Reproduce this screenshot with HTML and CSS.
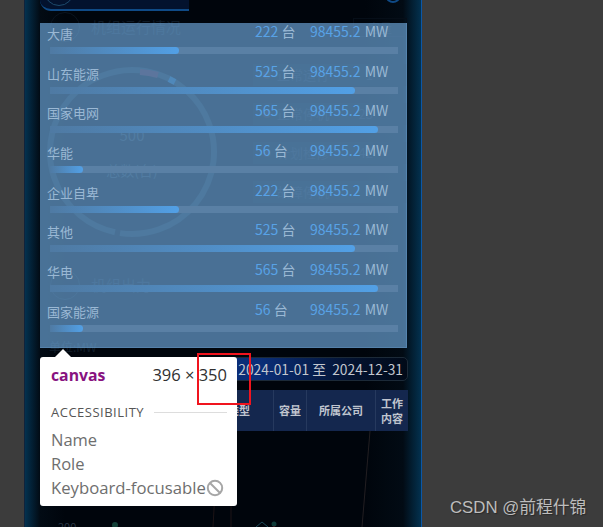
FILE: index.html
```html
<!DOCTYPE html>
<html lang="zh">
<head>
<meta charset="utf-8">
<title>canvas</title>
<link rel="stylesheet" href="styles.css">
</head>
<body>
<div class="stage">
  <main class="phone">
    <div class="topbar"><span class="topring"></span></div>
    <span class="topdot"></span>
    <section class="ghost-head">
      <span class="ghost-icon"></span>
      <h2>机组运行情况</h2>
      <span class="pill">容量</span>
    </section>
    <section class="gauge-row">
      <div class="gauge">
        <svg class="gauge-svg" viewBox="0 0 176 176" aria-hidden="true">
          <path d="M71 168.2A82 82 0 1 1 76 169.1" fill="none" stroke="#0f1e2a" stroke-width="6"/>
          <path d="M96 8A82 82 0 0 1 114 11" fill="none" stroke="#3a1424" stroke-width="6"/>
          <path d="M125 15L131 18" fill="none" stroke="#124a78" stroke-width="6"/>
        </svg>
        <span class="g-num">500</span>
        <span class="g-label">总数(台)</span>
      </div>
      <ul class="status">
        <li><b></b>正常运行<i>1</i></li>
        <li><b></b>正常停机<i>23</i></li>
        <li><b></b>计划检修<i>42</i></li>
        <li><b></b>故障停机<i>7</i></li>
      </ul>
    </section>
    <section class="ghost-head second">
      <span class="ghost-icon"></span>
      <h2>机组出力</h2>
    </section>
    <p class="unit">单位:MW</p>
    <div class="date-row">
      <div class="date">2024-01-01 至&nbsp; 2024-12-31</div>
    </div>
    <div class="thead">
      <div class="th th-a">机组类型</div>
      <div class="th th-b">容量</div>
      <div class="th th-c">所属公司</div>
      <div class="th th-d">工作<br>内容</div>
    </div>
    <div class="chart">
      <svg class="chart-svg" viewBox="0 0 366 96" aria-hidden="true">
        <path d="M329 0L321 96" stroke="#221f22" fill="none"/>
        <path d="M174 60L172 96M190 60L190 96" stroke="#1c1416" fill="none"/>
        <circle cx="74" cy="94" r="3" fill="#134038"/>
        <path d="M215 96L221 91L227 96" stroke="#1c4a58" fill="none"/>
        <circle cx="233" cy="93" r="2.5" fill="#0e3a38"/>
        <path d="M230 97L233 95L236 97" fill="#4a1620"/>
      </svg>
      <span class="tick">200</span>
    </div>
  </main>

  <div class="highlight">
    <div class="hrow"><div class="htext"><span class="name">大唐</span><span class="count"><em>222</em> 台</span><span class="power"><em>98455.2</em> MW</span></div><div class="track"><div class="fill" style="width:37%"></div></div></div>
    <div class="hrow"><div class="htext"><span class="name">山东能源</span><span class="count"><em>525</em> 台</span><span class="power"><em>98455.2</em> MW</span></div><div class="track"><div class="fill" style="width:87.6%"></div></div></div>
    <div class="hrow"><div class="htext"><span class="name">国家电网</span><span class="count"><em>565</em> 台</span><span class="power"><em>98455.2</em> MW</span></div><div class="track"><div class="fill" style="width:94.3%"></div></div></div>
    <div class="hrow"><div class="htext"><span class="name">华能</span><span class="count"><em>56</em> 台</span><span class="power"><em>98455.2</em> MW</span></div><div class="track"><div class="fill" style="width:9.5%"></div></div></div>
    <div class="hrow"><div class="htext"><span class="name">企业自卑</span><span class="count"><em>222</em> 台</span><span class="power"><em>98455.2</em> MW</span></div><div class="track"><div class="fill" style="width:37%"></div></div></div>
    <div class="hrow"><div class="htext"><span class="name">其他</span><span class="count"><em>525</em> 台</span><span class="power"><em>98455.2</em> MW</span></div><div class="track"><div class="fill" style="width:87.6%"></div></div></div>
    <div class="hrow"><div class="htext"><span class="name">华电</span><span class="count"><em>565</em> 台</span><span class="power"><em>98455.2</em> MW</span></div><div class="track"><div class="fill" style="width:94.3%"></div></div></div>
    <div class="hrow"><div class="htext"><span class="name">国家能源</span><span class="count"><em>56</em> 台</span><span class="power"><em>98455.2</em> MW</span></div><div class="track"><div class="fill" style="width:9.5%"></div></div></div>
  </div>

  <aside class="tip">
    <div class="tip-head"><span class="tag">canvas</span><span class="size">396 × 350</span></div>
    <div class="tip-section"><span>ACCESSIBILITY</span><hr></div>
    <div class="tip-line">Name</div>
    <div class="tip-line">Role</div>
    <div class="tip-line tip-key">Keyboard-focusable<svg class="ban" viewBox="0 0 18 18" aria-hidden="true"><circle cx="9" cy="9" r="7.2" fill="none" stroke="#a6a6a6" stroke-width="2"/><path d="M4 4L14 14" stroke="#a6a6a6" stroke-width="2"/></svg></div>
  </aside>
  <div class="redbox"></div>
  <div class="mark">CSDN @前程什锦</div>
</div>
</body>
</html>
```

FILE: styles.css
```css
* { box-sizing: border-box; }
html, body { margin: 0; padding: 0; }
body {
  background: #3c3c3c;
  font-family: "Noto Sans CJK SC", "Noto Sans", sans-serif;
  overflow: hidden;
}
.stage {
  position: relative;
  width: 603px;
  height: 527px;
  overflow: hidden;
}
.phone {
  position: relative;
  width: 398px;
  height: 527px;
  margin-left: 24px;
  padding: 0 14px 0 16px;
  border-left: 1px solid #10233c;
  border-right: 1px solid #0a57a8;
  background:
    linear-gradient(90deg, #03314f 0, #020b14 15px, #00050c 40px, #00050c 340px, #020b14 378px, #03314f 396px);
  color: #121e2a;
  display: flex;
  flex-direction: column;
}
.topbar {
  height: 11px;
  width: 149px;
  flex: none;
  background: #03122e;
  border-bottom: 2px solid #0f4a86;
  margin-left: -1px;
  overflow: hidden;
  position: relative;
  border-bottom-left-radius: 14px;
}
.topring {
  display: block;
  position: absolute;
  left: 4px;
  top: -24px;
  width: 30px;
  height: 30px;
  border: 1px solid #1d4a6c;
  border-radius: 50%;
}
.topdot {
  position: absolute;
  left: 361px;
  top: -9px;
  width: 14px;
  height: 12px;
  border: 2px solid #0f4a86;
  border-radius: 50%;
}
.ghost-head {
  display: flex;
  align-items: center;
  height: 32px;
  flex: none;
  padding-left: 9px;
  gap: 11px;
}
.ghost-head h2 {
  margin: 0;
  font-size: 15px;
  line-height: 20px;
  font-weight: 400;
  color: #0f1a26;
}
.ghost-icon {
  width: 30px;
  height: 30px;
  border: 1px solid #0a1420;
  border-radius: 50%;
  flex: none;
}
.pill {
  margin-left: auto;
  font-size: 12px;
  color: #0f1a26;
  border: 1px solid #060e18;
  padding: 0 14px;
}
.ghost-head.second { margin-top: 26px; }
.gauge-row {
  display: flex;
  height: 200px;
  flex: none;
  padding-top: 21px;
  padding-left: 3px;
  gap: 33px;
}
.gauge {
  position: relative;
  width: 176px;
  height: 176px;
  flex: none;
  text-align: center;
  color: #1c2834;
}
.gauge-svg { position: absolute; inset: 0; width: 176px; height: 176px; }
.g-num {
  position: absolute;
  left: 0;
  right: 0;
  top: 61px;
  font-size: 15px;
  line-height: 20px;
}
.g-label {
  position: absolute;
  left: 0;
  right: 0;
  top: 96px;
  font-size: 14px;
  line-height: 20px;
}
.status {
  list-style: none;
  margin: 0;
  padding: 0;
  flex: 1;
  display: flex;
  flex-direction: column;
  gap: 17px;
  font-size: 13px;
  line-height: 22px;
  color: #101a26;
}
.status li {
  display: flex;
  align-items: center;
  gap: 6px;
  height: 22px;
  background: #020b14;
  padding-left: 10px;
}
.status b { width: 8px; height: 8px; border-radius: 50%; background: #1a1216; }
.status i { font-style: normal; margin-left: auto; margin-right: 34px; }
.unit {
  margin: 38px 0 0 8px;
  font-size: 12px;
  line-height: 16px;
  color: #121e2a;
  flex: none;
}
.date-row {
  display: flex;
  justify-content: flex-end;
  margin: 2px -1px 0 0;
  flex: none;
}
.date {
  width: 211px;
  height: 24px;
  border: 1px solid #1c2a38;
  border-radius: 5px;
  background: linear-gradient(90deg, #0a2e78 0, #0a2e78 30%, #03122e 75%, #010a18 100%);
  font-size: 13.8px;
  line-height: 22px;
  color: #c2c7cf;
  text-align: right;
  padding-right: 4px;
  white-space: nowrap;
}
.thead {
  display: flex;
  height: 41px;
  margin: 9px -1px 0 0;
  flex: none;
  background: #14274e;
  color: #c0c5cf;
  font-size: 11px;
  font-weight: 700;
  line-height: 15px;
  text-align: center;
}
.th {
  display: flex;
  align-items: center;
  justify-content: center;
  border-right: 1px solid #26395e;
}
.th-a { flex: 1; justify-content: flex-end; padding-right: 23px; }
.th-b { width: 33px; }
.th-c { width: 69px; }
.th-d { width: 32px; border-right: 0; }
.chart { position: relative; flex: 1; margin-right: -1px; }
.chart-svg { display: block; width: 366px; height: 96px; }
.tick {
  position: absolute;
  left: 17px;
  top: 88px;
  font-size: 11px;
  line-height: 14px;
  color: #2a3644;
}

.highlight {
  position: absolute;
  left: 40px;
  top: 23px;
  width: 367px;
  height: 325px;
  background: rgba(111, 168, 220, 0.66);
  border: 1px solid rgba(111, 168, 220, 0.3);
  border-width: 0 1px 1px 0;
  display: grid;
  grid-auto-rows: 39.7px;
  padding-right: 8px;
}
.hrow { display: flex; flex-direction: column; }
.htext {
  display: flex;
  height: 22px;
  flex: none;
  padding-left: 7px;
  color: #9ab8d4;
  font-size: 13px;
  line-height: 22px;
  white-space: nowrap;
}
.htext em { font-style: normal; color: #58a2e6; }
.name { width: 208px; flex: none; }
.count, .power { font-size: 14px; line-height: 17px; }
.count { width: 55px; flex: none; }
.power { word-spacing: 1px; }
.track {
  height: 7px;
  margin: 2px 0 0 10px;
  background: #5a80a5;
  flex: none;
}
.fill {
  height: 7px;
  border-radius: 0 4px 4px 0;
  background: linear-gradient(90deg, #4f7aa3 0, #52a0e6 100%);
}

.tip {
  position: absolute;
  left: 40px;
  top: 357px;
  width: 197px;
  height: 149px;
  background: #fff;
  border-radius: 3px;
  padding: 7px 10px 0 11px;
  font-family: "Open Sans", "Noto Sans", sans-serif;
}
.tip::before {
  content: "";
  position: absolute;
  left: 15px;
  top: -8px;
  border: 8px solid transparent;
  border-top: 0;
  border-bottom-color: #fff;
}
.tip-head {
  display: flex;
  justify-content: space-between;
  font-size: 15.8px;
  line-height: 22px;
  color: #303030;
}
.size { font-size: 16.5px; }
.tag { color: #881280; font-weight: 700; }
.tip-section {
  display: flex;
  align-items: center;
  gap: 10px;
  margin-top: 18px;
  font-size: 13px;
  line-height: 16px;
  color: #555;
  letter-spacing: .5px;
}
.tip-section hr {
  flex: 1;
  margin: 0;
  border: 0;
  border-top: 1px solid #ddd;
}
.tip-line {
  font-size: 16.5px;
  line-height: 24px;
  color: #6e6e6e;
}
.tip-section + .tip-line { margin-top: 8px; }
.tip-key {
  display: flex;
  align-items: center;
  font-size: 16.7px;
  white-space: nowrap;
}
.ban { width: 18px; height: 18px; flex: none; }
.redbox {
  position: absolute;
  left: 197px;
  top: 353px;
  width: 54px;
  height: 52px;
  border: 2px solid #f0141e;
}
.mark {
  position: absolute;
  left: 450px;
  top: 497px;
  font-family: "Liberation Sans", "Noto Sans CJK SC", sans-serif;
  font-size: 16.8px;
  line-height: 22px;
  color: #bdbdbd;
  text-shadow: 1px 1px 1px #2a2a2a;
  white-space: nowrap;
}
```
